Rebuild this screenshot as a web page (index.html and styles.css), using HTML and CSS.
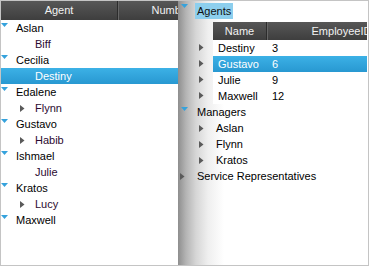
FILE: index.html
```html
<!DOCTYPE html>
<html>
<head>
<meta charset="utf-8">
<link rel="stylesheet" href="styles.css">
</head>
<body>
<div class="frame">
  <div class="left">
    <div class="hdr">
      <div class="hc hc-agent">Agent</div>
      <div class="hc hc-num">Number</div>
    </div>
    <div class="row l0"><span class="exp ex-down"><svg width="7" height="4"><path d="M0 0H7L3.5 4Z" fill="#35a2dc"/></svg></span><span class="txt">Aslan</span></div>
    <div class="row l1"><span class="exp"></span><span class="txt">Biff</span></div>
    <div class="row l0"><span class="exp ex-down"><svg width="7" height="4"><path d="M0 0H7L3.5 4Z" fill="#35a2dc"/></svg></span><span class="txt">Cecilia</span></div>
    <div class="row l1 sel"><span class="exp"></span><span class="txt">Destiny</span></div>
    <div class="row l0"><span class="exp ex-down"><svg width="7" height="4"><path d="M0 0H7L3.5 4Z" fill="#35a2dc"/></svg></span><span class="txt">Edalene</span></div>
    <div class="row l1"><span class="exp ex-right"><svg width="5" height="7"><path d="M0 0L4.5 3.5L0 7Z" fill="#5a5a5a"/></svg></span><span class="txt">Flynn</span></div>
    <div class="row l0"><span class="exp ex-down"><svg width="7" height="4"><path d="M0 0H7L3.5 4Z" fill="#35a2dc"/></svg></span><span class="txt">Gustavo</span></div>
    <div class="row l1"><span class="exp ex-right"><svg width="5" height="7"><path d="M0 0L4.5 3.5L0 7Z" fill="#5a5a5a"/></svg></span><span class="txt">Habib</span></div>
    <div class="row l0"><span class="exp ex-down"><svg width="7" height="4"><path d="M0 0H7L3.5 4Z" fill="#35a2dc"/></svg></span><span class="txt">Ishmael</span></div>
    <div class="row l1"><span class="exp"></span><span class="txt">Julie</span></div>
    <div class="row l0"><span class="exp ex-down"><svg width="7" height="4"><path d="M0 0H7L3.5 4Z" fill="#35a2dc"/></svg></span><span class="txt">Kratos</span></div>
    <div class="row l1"><span class="exp ex-right"><svg width="5" height="7"><path d="M0 0L4.5 3.5L0 7Z" fill="#5a5a5a"/></svg></span><span class="txt">Lucy</span></div>
    <div class="row l0"><span class="exp ex-down"><svg width="7" height="4"><path d="M0 0H7L3.5 4Z" fill="#35a2dc"/></svg></span><span class="txt">Maxwell</span></div>
  </div>
  <div class="right">
    <div class="trow top">
      <span class="rexp rx-down"><svg width="7" height="4"><path d="M0 0H7L3.5 4Z" fill="#35a2dc"/></svg></span>
      <span class="label">Agents</span>
    </div>
    <div class="ghdr">
      <div class="gh gh-name">Name</div>
      <div class="gh gh-id">EmployeeID</div>
    </div>
    <div class="grow"><span class="gexp"><svg width="5" height="7"><path d="M0 0L4.5 3.5L0 7Z" fill="#5a5a5a"/></svg></span><div class="gcells"><span class="gname">Destiny</span><span class="gid">3</span></div></div>
    <div class="grow"><span class="gexp"><svg width="5" height="7"><path d="M0 0L4.5 3.5L0 7Z" fill="#5a5a5a"/></svg></span><div class="gcells gsel"><span class="gname">Gustavo</span><span class="gid">6</span></div></div>
    <div class="grow"><span class="gexp"><svg width="5" height="7"><path d="M0 0L4.5 3.5L0 7Z" fill="#5a5a5a"/></svg></span><div class="gcells"><span class="gname">Julie</span><span class="gid">9</span></div></div>
    <div class="grow"><span class="gexp"><svg width="5" height="7"><path d="M0 0L4.5 3.5L0 7Z" fill="#5a5a5a"/></svg></span><div class="gcells"><span class="gname">Maxwell</span><span class="gid">12</span></div></div>
    <div class="trow"><span class="rexp rx-down"><svg width="7" height="4"><path d="M0 0H7L3.5 4Z" fill="#35a2dc"/></svg></span><span class="rtxt">Managers</span></div>
    <div class="trow r1"><span class="rexp1"><svg width="5" height="7"><path d="M0 0L4.5 3.5L0 7Z" fill="#5a5a5a"/></svg></span><span class="rtxt">Aslan</span></div>
    <div class="trow r1"><span class="rexp1"><svg width="5" height="7"><path d="M0 0L4.5 3.5L0 7Z" fill="#5a5a5a"/></svg></span><span class="rtxt">Flynn</span></div>
    <div class="trow r1"><span class="rexp1"><svg width="5" height="7"><path d="M0 0L4.5 3.5L0 7Z" fill="#5a5a5a"/></svg></span><span class="rtxt">Kratos</span></div>
    <div class="trow"><span class="rexp rx-right"><svg width="5" height="7"><path d="M0 0L4.5 3.5L0 7Z" fill="#5a5a5a"/></svg></span><span class="rtxt">Service Representatives</span></div>
  </div>
</div>
</body>
</html>
```

FILE: styles.css
```css
* { box-sizing: border-box; }
html, body { margin: 0; padding: 0; background: #fff; }
body {
  width: 370px;
  height: 266px;
  overflow: hidden;
  font-family: "Liberation Sans", Arial, sans-serif;
  font-size: 11px;
  color: #000;
}
.frame {
  width: 369px;
  height: 266px;
  border: 1px solid #c4c4c4;
  display: flex;
  background: #fff;
}
.left {
  width: 177px;
  flex: none;
  overflow: hidden;
  background: #fff;
}
.hdr {
  display: flex;
  height: 19px;
  width: 240px;
  background: linear-gradient(#575757, #3e3e3e);
  color: #f2f2f2;
}
.hc {
  line-height: 19px;
  text-align: center;
  white-space: nowrap;
}
.hc-agent {
  width: 117px;
  border-right: 1px solid #2c2c2c;
  box-shadow: 1px 0 0 #666;
}
.hc-num { width: 106px; }
.row {
  display: flex;
  height: 16px;
  line-height: 17px;
  white-space: nowrap;
}
.row .exp { flex: none; display: flex; }
.l0 .exp { width: 15px; padding-top: 3px; padding-left: 0; }
.l1 .exp { width: 34px; padding-left: 19px; padding-top: 5px; }
.l1 .txt { color: #2c0a30; }
.row.sel {
  background: linear-gradient(#3cb1e6, #2898d1);
}
.row.sel .txt { color: #fff; }

.right {
  flex: 1;
  min-width: 0;
  overflow: hidden;
  background: linear-gradient(to right, #8e8e8e 0px, #b4b4b4 8px, #d6d6d6 18px, #efefef 30px, #fff 46px);
}
.trow {
  display: flex;
  height: 16px;
  line-height: 16px;
  white-space: nowrap;
}
.trow.top { height: 21px; }
.rexp { flex: none; width: 17px; display: flex; }
.rx-down { padding-left: 3px; padding-top: 3px; }
.rx-right { padding-left: 2px; padding-top: 5px; }
.label {
  margin-top: 2px;
  height: 16px;
  padding: 0 2px;
  background: #8dcfee;
  color: #111;
}
.rtxt { padding-left: 2px; }
.r1 .rexp1 { flex: none; width: 38px; padding-left: 21px; padding-top: 5px; display: flex; }
.r1 .rtxt { padding-left: 0; }

.ghdr {
  display: flex;
  height: 18px;
  margin-left: 35px;
  margin-right: 1px;
  background: linear-gradient(#575757, #3e3e3e);
  color: #f2f2f2;
  overflow: hidden;
}
.gh { line-height: 18px; text-align: center; white-space: nowrap; flex: none; }
.gh-name {
  width: 54px;
  border-right: 1px solid #2c2c2c;
  box-shadow: 1px 0 0 #666;
}
.gh-id { width: 149px; }
.grow {
  display: flex;
  height: 16px;
  line-height: 16px;
  white-space: nowrap;
}
.gexp { flex: none; width: 35px; padding-left: 21px; padding-top: 4px; display: flex; }
.gcells {
  flex: 1;
  display: flex;
  margin-right: 1px;
  background: #fff;
}
.gname { width: 54px; padding-left: 5px; }
.gid { padding-left: 5px; }
.gsel { background: linear-gradient(#3cb1e6, #2898d1); color: #fff; }
```
